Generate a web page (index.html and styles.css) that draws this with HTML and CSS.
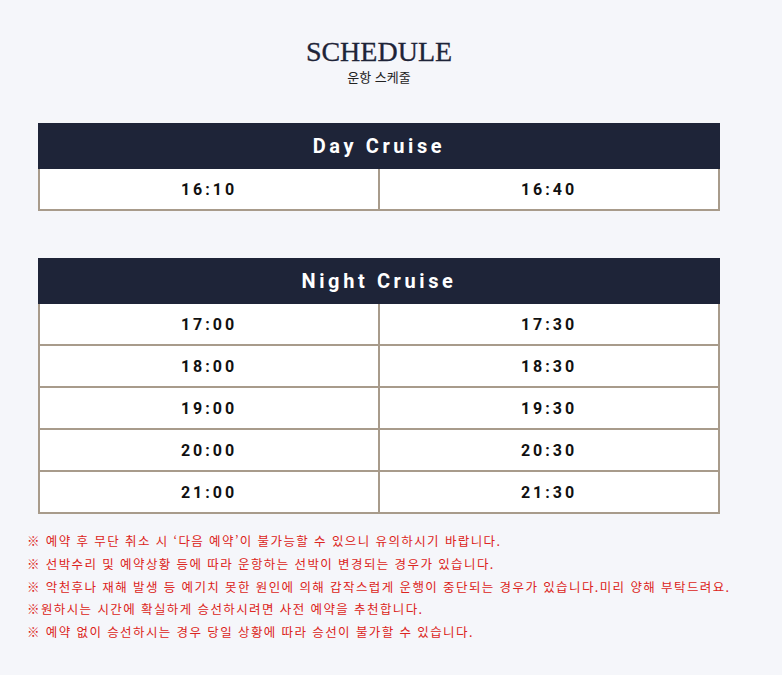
FILE: index.html
```html
<!DOCTYPE html>
<html lang="ko">
<head>
<meta charset="utf-8">
<title>Schedule</title>
<link rel="stylesheet" href="styles.css">
</head>
<body>
<main class="page">
  <div class="content">
    <header class="title">
      <h1>SCHEDULE</h1>
      <p>운항 스케줄</p>
    </header>

    <section class="cruise">
      <h2>Day Cruise</h2>
      <div class="slots">
        <div class="slot">16:10</div>
        <div class="slot">16:40</div>
      </div>
    </section>

    <section class="cruise night">
      <h2>Night Cruise</h2>
      <div class="slots">
        <div class="slot">17:00</div>
        <div class="slot">17:30</div>
        <div class="slot">18:00</div>
        <div class="slot">18:30</div>
        <div class="slot">19:00</div>
        <div class="slot">19:30</div>
        <div class="slot">20:00</div>
        <div class="slot">20:30</div>
        <div class="slot">21:00</div>
        <div class="slot">21:30</div>
      </div>
    </section>
  </div>

  <ul class="notes">
    <li>※ 예약 후 무단 취소 시 ‘다음 예약’이 불가능할 수 있으니 유의하시기 바랍니다.</li>
    <li>※ 선박수리 및 예약상황 등에 따라 운항하는 선박이 변경되는 경우가 있습니다.</li>
    <li>※ 악천후나 재해 발생 등 예기치 못한 원인에 의해 갑작스럽게 운행이 중단되는 경우가 있습니다.미리 양해 부탁드려요.</li>
    <li>※원하시는 시간에 확실하게 승선하시려면 사전 예약을 추천합니다.</li>
    <li>※ 예약 없이 승선하시는 경우 당일 상황에 따라 승선이 불가할 수 있습니다.</li>
  </ul>
</main>
</body>
</html>
```

FILE: styles.css
```css
html, body {
  margin: 0;
  padding: 0;
  background: #f5f6fa;
}

.page {
  padding: 36px 0 30px 27px;
}

.content {
  width: 682px;
  margin-left: 11px;
}

.title {
  text-align: center;
  margin-bottom: 38px;
}

.title h1 {
  margin: 0;
  font-family: "Liberation Serif", "Times New Roman", serif;
  font-weight: 400;
  font-size: 28px;
  line-height: 32px;
  color: #1e2438;
  -webkit-text-stroke: 0.3px #1e2438;
}

.title p {
  margin: 0;
  font-family: "Noto Sans CJK KR", sans-serif;
  font-size: 13px;
  line-height: 17px;
  color: #222;
}

.cruise + .cruise {
  margin-top: 47px;
}

.cruise h2 {
  margin: 0;
  height: 46px;
  background: #1e2438;
  color: #fff;
  font-family: Roboto, "Noto Sans", sans-serif;
  font-weight: 700;
  font-size: 20px;
  letter-spacing: 3.6px;
  line-height: 46px;
  text-align: center;
}

.slots {
  display: grid;
  grid-template-columns: 1fr 1fr;
  border-left: 2px solid #a89b8b;
  background: #fff;
}

.slot {
  height: 40px;
  border-right: 2px solid #a89b8b;
  border-bottom: 2px solid #a89b8b;
  font-family: Roboto, "Noto Sans", sans-serif;
  font-weight: 700;
  font-size: 16px;
  letter-spacing: 3px;
  color: #111;
  display: flex;
  align-items: center;
  justify-content: center;
}

.notes {
  list-style: none;
  margin: 16px 0 0;
  padding: 0;
  font-family: "Noto Sans CJK KR", sans-serif;
  font-size: 12.5px;
  letter-spacing: 1.4px;
  line-height: 22.8px;
  color: #dc2420;
}
```
